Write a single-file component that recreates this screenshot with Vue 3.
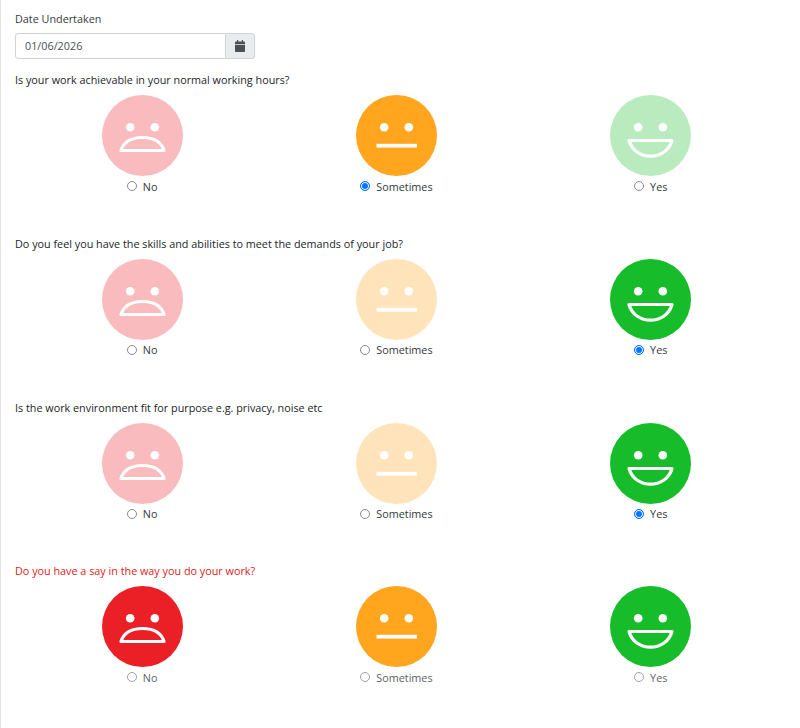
<script setup>
const questions = [
  { text: 'Is your work achievable in your normal working hours?', picked: 'Sometimes', dim: ['No', 'Yes'] },
  { text: 'Do you feel you have the skills and abilities to meet the demands of your job?', picked: 'Yes', dim: ['No', 'Sometimes'] },
  { text: 'Is the work environment fit for purpose e.g. privacy, noise etc', picked: 'Yes', dim: ['No', 'Sometimes'] },
  { text: 'Do you have a say in the way you do your work?', picked: null, dim: [], error: true },
]
const options = [
  { name: 'No', cls: 'no' },
  { name: 'Sometimes', cls: 'some' },
  { name: 'Yes', cls: 'yes' },
]
</script>

<template>
  <div class="page">
    <div class="date-label">Date Undertaken</div>
    <div class="date-group">
      <div class="date-input">01/06/2026</div>
      <div class="date-btn">
        <svg width="10" height="12" viewBox="0 0 10 12">
          <path fill="#495057" d="M2 0h1.200v1.400h3.600V0H8v1.400h1c.6 0 1 .4 1 1V4H0V2.400c0-.6.4-1 1-1h1zM0 4.800h10v6.100c0 .6-.4 1.100-1 1.100H1c-.6 0-1-.5-1-1.100z" />
        </svg>
      </div>
    </div>
    <section v-for="q in questions" :key="q.text" class="question">
      <div class="q-text" :class="{ error: q.error }">{{ q.text }}</div>
      <div class="opts">
        <label v-for="o in options" :key="o.name" class="opt">
          <svg class="face" :class="[o.cls, { dim: q.dim.includes(o.name) }]" viewBox="0 0 81 81" width="81" height="81">
            <circle cx="40.500" cy="40.500" r="40.500" class="disc" />
            <circle cx="28.200" cy="32.300" r="4.300" fill="#fff" />
            <circle cx="52.800" cy="32.300" r="4.300" fill="#fff" />
            <path v-if="o.cls === 'no'" d="M19 55.500C22 46 31 42.500 40.500 42.500S59 46 62 55.500Z" fill="none" stroke="#fff" stroke-width="3.200" stroke-linejoin="round" />
            <rect v-else-if="o.cls === 'some'" x="20.500" y="48.800" width="40.500" height="3.800" fill="#fff" />
            <path v-else d="M19 45.500H62C59 56 50 61.200 40.500 61.200S22 56 19 45.500Z" fill="none" stroke="#fff" stroke-width="3.200" stroke-linejoin="round" />
          </svg>
          <span class="radio-row" :class="{ faded: q.error }">
            <span class="radio" :class="{ on: q.picked === o.name }"></span>
            <span class="opt-name">{{ o.name }}</span>
          </span>
        </label>
      </div>
    </section>
  </div>
</template>

<style scoped>
.page {
  box-sizing: border-box;
  width: 800px;
  height: 728px;
  padding: 12px 22px 0 14px;
  border-left: 1px solid #e3e3e3;
  background: #fff;
  color: #343a40;
  font-family: "Open Sans", "Noto Sans", sans-serif;
  font-size: 10.800px;
  overflow: hidden;
}
.date-label { height: 14px; line-height: 13px; }
.date-group { display: flex; width: 240px; height: 26px; margin-top: 7px; }
.date-input {
  flex: 1;
  border: 1px solid #ced4da;
  border-radius: 3px 0 0 3px;
  padding-left: 9px;
  line-height: 24px;
  color: #495057;
}
.date-btn {
  width: 28px;
  display: flex;
  align-items: center;
  justify-content: center;
  background: #e9ecef;
  border: 1px solid #ced4da;
  border-left: none;
  border-radius: 0 3px 3px 0;
}
.question { height: 163.800px; }
.date-group + .question { margin-top: 14px; }
.q-text { height: 14px; line-height: 14px; color: #212529; }
.q-text.error { color: #e01b1b; }
.opts { display: grid; grid-template-columns: repeat(3, 254.300px); margin-top: 8px; }
.opt { display: flex; flex-direction: column; align-items: center; }
.face { display: block; }
.no .disc { fill: #eb1f26; }
.some .disc { fill: #ffa61e; }
.yes .disc { fill: #17bc2a; }
.face.dim .disc { opacity: 0.3; }
.radio-row { display: flex; align-items: center; gap: 6px; height: 14px; margin-top: 3px; }
.radio-row.faded { opacity: 0.8; }
.opt-name { line-height: 13px; }
.radio {
  box-sizing: border-box;
  width: 10px;
  height: 10px;
  border-radius: 50%;
  border: 1px solid #8a8a8a;
  background: #fff;
}
.radio.on { border: 1px solid #0075ff; box-shadow: inset 0 0 0 1px #fff; background: #0075ff; }
</style>
